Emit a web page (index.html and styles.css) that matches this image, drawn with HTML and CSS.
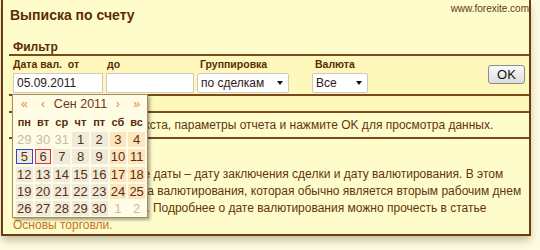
FILE: index.html
```html
<!DOCTYPE html>
<html lang="ru">
<head>
<meta charset="utf-8">
<title>Выписка по счету</title>
<link rel="stylesheet" href="styles.css">
</head>
<body>
<div class="panel">
  <header class="panel-head">
    <h1 class="panel-title">Выписка по счету</h1>
    <span class="site">www.forexite.com</span>
  </header>

  <h2 class="section-title">Фильтр</h2>

  <form class="filter">
    <div class="field field-from">
      <label class="field-label">Дата вал.&nbsp; от</label>
      <div class="date-wrap">
        <input class="text-input" type="text" value="05.09.2011">
        <div class="calendar">
          <div class="cal-head">
            <span class="cal-nav">«</span>
            <span class="cal-nav">‹</span>
            <span class="cal-month">Сен 2011</span>
            <span class="cal-nav">›</span>
            <span class="cal-nav">»</span>
          </div>
          <div class="cal-dow">
            <span>пн</span><span>вт</span><span>ср</span><span>чт</span><span>пт</span><span>сб</span><span>вс</span>
          </div>
          <div class="cal-days">
            <span class="day other">29</span><span class="day other">30</span><span class="day other">31</span><span class="day">1</span><span class="day">2</span><span class="day weekend">3</span><span class="day weekend">4</span>
            <span class="day is-selected">5</span><span class="day is-today">6</span><span class="day">7</span><span class="day">8</span><span class="day">9</span><span class="day weekend">10</span><span class="day weekend">11</span>
            <span class="day">12</span><span class="day">13</span><span class="day">14</span><span class="day">15</span><span class="day">16</span><span class="day weekend">17</span><span class="day weekend">18</span>
            <span class="day">19</span><span class="day">20</span><span class="day">21</span><span class="day">22</span><span class="day">23</span><span class="day weekend">24</span><span class="day weekend">25</span>
            <span class="day">26</span><span class="day">27</span><span class="day">28</span><span class="day">29</span><span class="day">30</span><span class="day other">1</span><span class="day other">2</span>
          </div>
        </div>
      </div>
    </div>

    <div class="field field-to">
      <label class="field-label">до</label>
      <input class="text-input" type="text" value="">
    </div>

    <div class="field field-group">
      <label class="field-label">Группировка</label>
      <span class="select">
        <select><option>по сделкам</option></select>
      </span>
    </div>

    <div class="field field-currency">
      <label class="field-label">Валюта</label>
      <span class="select">
        <select><option>Все</option></select>
      </span>
    </div>

    <button class="ok-button" type="button">OK</button>
  </form>

  <div class="results-head"></div>

  <p class="message">Укажите период, вид текста, параметры отчета и нажмите OK для просмотра данных.</p>

  <div class="note">
    <h3 class="note-title">Примечание</h3>
    <p class="note-text">Не стоит смешивать две даты – дату заключения сделки и дату валютирования. В этом<br>случае учитывается дата валютирования, которая обычно является вторым рабочим днем<br>после даты этой сделки. Подробнее о дате валютирования можно прочесть в статье<br><a class="note-link" href="#">Основы торговли.</a></p>
  </div>
</div>
</body>
</html>
```

FILE: styles.css
```css
* {
  box-sizing: border-box;
}

html,
body {
  margin: 0;
  padding: 0;
}

body {
  width: 540px;
  height: 250px;
  overflow: hidden;
  background: #fdfbe2;
  font-family: "Liberation Sans", Arial, sans-serif;
  color: #63340e;
}

.panel {
  margin-left: 1px;
  width: 530px;
  background: #fffccb;
  border: 2px solid #6e3b10;
  border-top: 0;
  box-shadow: 0 5px 8px -1px rgba(90, 70, 30, 0.35);
}

.panel-head {
  display: flex;
  justify-content: space-between;
  align-items: flex-start;
  padding-left: 7px;
}

.panel-title {
  margin: 0;
  padding-top: 6px;
  font-size: 14px;
  line-height: 18px;
  font-weight: bold;
  color: #5b2c06;
}

.site {
  padding-top: 3px;
  font-size: 10px;
  line-height: 12px;
  color: #5a3a1a;
}

.section-title {
  margin: 16px 0 0 6px;
  padding-left: 4px;
  font-size: 12px;
  line-height: 14px;
  font-weight: bold;
  color: #5b2c06;
  border-bottom: 2px solid #7b4a1c;
}

.filter {
  display: flex;
  align-items: flex-start;
  margin: 0 0 0 6px;
  padding: 2px 0 1px 4px;
  background: #fff8bc;
  border-bottom: 2px solid #7b4a1c;
}

.field {
  display: flex;
  flex-direction: column;
  gap: 2px;
}

.field-label {
  font-size: 10.5px;
  line-height: 13px;
  font-weight: bold;
  color: #5b2c06;
  white-space: nowrap;
}

.field-from {
  width: 90px;
  margin-right: 3px;
}

.field-to {
  width: 88px;
  margin-right: 3px;
}

.field-to .field-label {
  padding-left: 1px;
}

.field-group {
  width: 92px;
  margin-right: 23px;
}

.field-currency {
  width: 56px;
}

.field-group .field-label,
.field-currency .field-label {
  padding-left: 3px;
}

.date-wrap {
  position: relative;
}

.text-input {
  display: block;
  width: 100%;
  height: 20px;
  margin: 0;
  padding: 0 3px;
  border: 1px solid #cfcabb;
  background: #fff;
  font-family: "Liberation Sans", Arial, sans-serif;
  font-size: 12px;
  color: #2b2015;
}

.select {
  position: relative;
  display: block;
}

.select::after {
  content: "";
  position: absolute;
  right: 6px;
  top: 8px;
  border-left: 3.5px solid transparent;
  border-right: 3.5px solid transparent;
  border-top: 4px solid #111;
  pointer-events: none;
}

.select select {
  -webkit-appearance: none;
  appearance: none;
  display: block;
  width: 100%;
  height: 20px;
  margin: 0;
  padding: 0 0 0 3px;
  border: 1px solid #cfcabb;
  border-radius: 2px;
  background: #fff;
  font-family: "Liberation Sans", Arial, sans-serif;
  font-size: 12px;
  color: #2b2015;
}

.ok-button {
  margin: 7px 4px 0 auto;
  width: 37px;
  height: 19px;
  padding: 0;
  border: 1px solid #8c8c8c;
  border-radius: 3px;
  background: linear-gradient(#fbfbfb, #dcdcdc);
  font-family: "Liberation Sans", Arial, sans-serif;
  font-size: 13px;
  color: #111;
}

.results-head {
  height: 17px;
  margin-left: 6px;
  background: #fff8bc;
  border-bottom: 2px solid #7b4a1c;
}

.message {
  margin: 0 0 0 6px;
  padding: 4px 0 4px 4px;
  font-size: 12px;
  line-height: 16px;
  white-space: nowrap;
  border-bottom: 2px solid #7b4a1c;
}

.note {
  margin: 10px 0 0 6px;
  padding-left: 4px;
}

.note-title {
  margin: 0;
  font-size: 12px;
  line-height: 17px;
  font-weight: bold;
  color: #5b2c06;
}

.note-text {
  margin: 0;
  font-size: 12px;
  line-height: 17px;
  white-space: nowrap;
}

.note-link {
  color: #c8711f;
  text-decoration: none;
}

/* Calendar popup */
.calendar {
  position: absolute;
  left: -1px;
  top: calc(100% + 1px);
  z-index: 2;
  width: 136px;
  padding: 0 2px 1px 3px;
  background: #fffce6;
  border: 1px solid #a88a62;
  box-shadow: 2px 2px 3px rgba(0, 0, 0, 0.35);
}

.cal-head,
.cal-dow,
.cal-days {
  display: grid;
  grid-template-columns: repeat(7, 1fr);
  column-gap: 2px;
  text-align: center;
}

.cal-head {
  height: 18px;
  font-size: 12.5px;
  line-height: 18px;
}

.cal-nav {
  color: #e8892c;
}

.cal-month {
  grid-column: span 3;
  color: #6b3a12;
}

.cal-dow {
  height: 18px;
  font-size: 11px;
  line-height: 18px;
  font-weight: bold;
  color: #5b2c06;
}

.cal-days {
  margin-top: 1px;
  grid-auto-rows: 15px;
  row-gap: 2.3px;
}

.day {
  font-size: 13px;
  line-height: 15px;
  background: #eeebdd;
  color: #5b3010;
}

.day.weekend {
  background: #fde5bd;
}

.day.other {
  background: transparent;
  color: #c4bba8;
}

.day.is-selected {
  box-shadow: inset 0 0 0 1px #2f45e0;
}

.day.is-today {
  box-shadow: inset 0 0 0 1px #e53535;
}
```
